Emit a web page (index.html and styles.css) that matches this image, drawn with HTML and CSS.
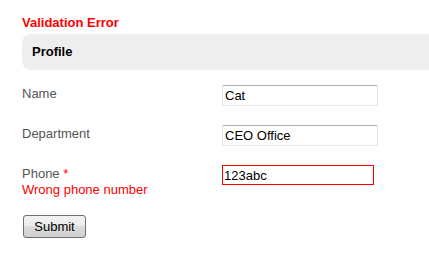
FILE: index.html
```html
<!DOCTYPE html>
<html lang="en">
<head>
  <meta charset="UTF-8" />
  <title>Profile</title>
  <link rel="stylesheet" href="styles.css">
</head>
<body>
  <h2 class="error-title">Validation Error</h2>
  <div class="panel">Profile</div>
  <form class="profile-form">
    <div class="row">
      <label for="name">Name</label>
      <input type="text" id="name" name="name" value="Cat">
    </div>
    <div class="row">
      <label for="department">Department</label>
      <input type="text" id="department" name="department" value="CEO Office">
    </div>
    <div class="row">
      <label for="phone">Phone <span class="req">*</span><span class="msg">Wrong phone number</span></label>
      <input type="text" id="phone" name="phone" value="123abc" class="invalid">
    </div>
    <button type="submit">Submit</button>
  </form>
</body>
</html>
```

FILE: styles.css
```css
body {
  margin: 0;
  padding: 15px 0 0 22px;
  font-family: "Liberation Sans", Arial, sans-serif;
  font-size: 13px;
  color: #000;
}
.error-title {
  margin: 0;
  font-size: 13px;
  line-height: 16px;
  font-weight: bold;
  color: #ff0000;
}
.panel {
  margin-top: 3px;
  height: 36px;
  line-height: 36px;
  padding-left: 10px;
  background: #eeeeee;
  border-radius: 9px 0 0 9px;
  font-weight: bold;
}
.profile-form {
  margin-top: 15px;
}
.row {
  display: grid;
  grid-template-columns: 200px auto;
  align-items: start;
  height: 40px;
}
label {
  padding-top: 1px;
  line-height: 16px;
  color: #555555;
}
.req {
  color: #ff0000;
}
.msg {
  display: block;
  color: #ff0000;
}
input {
  box-sizing: border-box;
  width: 156px;
  height: 21px;
  padding: 0 2px;
  margin: 0;
  font-family: "Liberation Sans", Arial, sans-serif;
  font-size: 13px;
  color: #000;
  border: 1px solid;
  border-color: #abadb3 #dbdfe6 #e3e9ef #e2e3ea;
  border-radius: 2px;
  outline: none;
}
input.invalid {
  width: 152px;
  height: 20px;
  padding: 0 1px;
  border: 1px solid #ff0000;
  border-radius: 0;
}
button {
  margin: 10px 0 0 1px;
  width: 63px;
  height: 23px;
  padding: 0;
  font-family: "Liberation Sans", Arial, sans-serif;
  font-size: 13px;
  color: #000;
  border: 1px solid #707070;
  border-radius: 3px;
  background: linear-gradient(#f2f2f2 0%, #ebebeb 50%, #dddddd 50%, #cfcfcf 100%);
  cursor: pointer;
}
```
